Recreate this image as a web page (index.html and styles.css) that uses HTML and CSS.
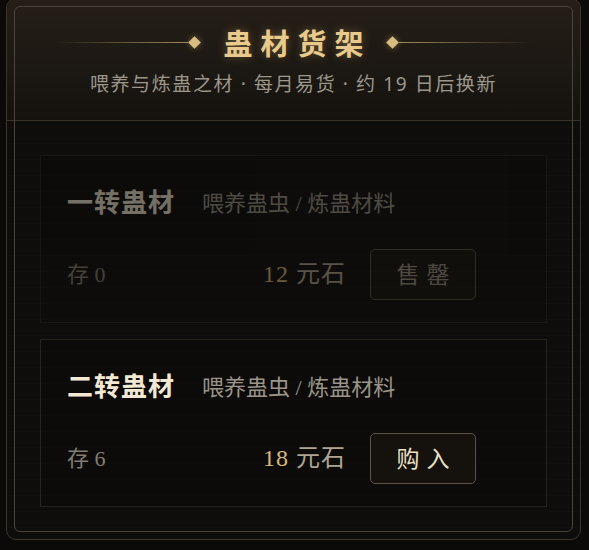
FILE: index.html
```html
<!DOCTYPE html>
<html lang="zh-CN">
<head>
  <meta charset="UTF-8">
  <meta name="viewport" content="width=device-width, initial-scale=1.0">
  <title>蛊材货架</title>
  <link rel="stylesheet" href="styles.css">
</head>
<body>
  <section class="shelf">
    <header class="shelf-head">
      <div class="title-row">
        <span class="rule left"></span>
        <span class="gem"></span>
        <h1 class="title">蛊材货架</h1>
        <span class="gem"></span>
        <span class="rule right"></span>
      </div>
      <p class="subtitle">喂养与炼蛊之材 · 每月易货 · 约 19 日后换新</p>
    </header>

    <main class="shelf-body">
      <!-- 一转：已售罄 -->
      <div class="item sold-out">
        <div class="item-head">
          <h2 class="item-name">一转蛊材</h2>
          <span class="item-desc">喂养蛊虫 / 炼蛊材料</span>
        </div>
        <div class="item-row">
          <span class="stock">存 0</span>
          <span class="price"><b>12</b> 元石</span>
          <button class="btn" disabled>售罄</button>
        </div>
      </div>

      <div class="item">
        <div class="item-head">
          <h2 class="item-name">二转蛊材</h2>
          <span class="item-desc">喂养蛊虫 / 炼蛊材料</span>
        </div>
        <div class="item-row">
          <span class="stock">存 6</span>
          <span class="price"><b>18</b> 元石</span>
          <button class="btn">购入</button>
        </div>
      </div>
    </main>
  </section>
</body>
</html>
```

FILE: styles.css
```css
:root {
  --bg: #0b0a08;
  --panel: #0f0d0b;
  --gold: #e8ca8c;
  --gold-dim: #d8b97a;
  --text: #f2e8d4;
  --sub: #9a9489;
  --muted: #837d72;
  --frame: #3d362b;
  --frame-in: #4a443a;
}
*, *::before, *::after {
  box-sizing: border-box;
}
body, h1, h2, p {
  margin: 0;
  padding: 0;
}
body {
  background: var(--bg);
  color: var(--text);
  font-family: "Liberation Serif", "Noto Sans CJK SC", serif;
  padding: 0 8px 0 6px;
  height: 550px;
  overflow: hidden;
}
.shelf {
  position: relative;
  margin-top: -2px;
  height: 542px;
  border: 1px solid var(--frame);
  border-radius: 10px;
  background:
    repeating-linear-gradient(180deg, rgba(255,255,255,0.012) 0 1px, transparent 1px 16px),
    var(--panel);
  overflow: hidden;
}
.shelf::before {
  content: "";
  position: absolute;
  inset: 7px;
  border: 1px solid var(--frame-in);
  border-radius: 6px;
  pointer-events: none;
}
.shelf-head {
  padding: 23px 0 22px;
  text-align: center;
  background: linear-gradient(180deg, #261f18 0%, #1c1813 55%, #15120e 100%);
  border-bottom: 1px solid #3a3329;
}
.title-row {
  display: flex;
  align-items: center;
  justify-content: center;
  height: 40px;
}
.rule {
  width: 134px;
  height: 1px;
}
.rule.left {
  background: linear-gradient(90deg, rgba(160,138,92,0) 0%, #a08a5c 100%);
}
.rule.right {
  background: linear-gradient(90deg, #a08a5c 0%, rgba(160,138,92,0) 100%);
}
.gem {
  width: 9px;
  height: 9px;
  margin: 0 2px;
  background: #d8bc80;
  transform: rotate(45deg);
  box-shadow: 0 0 6px rgba(216,188,128,0.45);
}
.title {
  margin: 0 14px;
  padding-left: 8px;
  font-family: "Noto Sans CJK SC", sans-serif;
  font-size: 29px;
  font-weight: 700;
  line-height: 40px;
  letter-spacing: 8px;
  color: var(--gold);
  text-shadow: 0 0 10px rgba(230,190,110,0.35);
}
.subtitle {
  margin-top: 8px;
  font-family: "Noto Sans", "Noto Sans CJK SC", sans-serif;
  font-size: 19px;
  line-height: 28px;
  letter-spacing: 1.6px;
  color: #9c968b;
}
.shelf-body {
  padding: 34px 33px 0;
  display: flex;
  flex-direction: column;
  gap: 16px;
}
.item {
  border: 1px solid #26221c;
  padding: 28px 70px 22px 26px;
  background: rgba(10,9,7,0.35);
}
.item.sold-out {
  opacity: 0.45;
}
.item-head {
  display: flex;
  align-items: center;
  height: 34px;
}
.item-name {
  font-family: "Noto Sans CJK SC", sans-serif;
  font-size: 26px;
  font-weight: 700;
  line-height: 34px;
  letter-spacing: 1px;
  color: var(--text);
}
.item-desc {
  margin-left: 27px;
  font-size: 22px;
  color: var(--sub);
}
.item-row {
  display: flex;
  align-items: center;
  margin-top: 31px;
  height: 51px;
}
.stock {
  flex: 1;
  padding-bottom: 6px;
  font-size: 22px;
  color: var(--muted);
}
.price {
  margin-right: 24px;
  padding-bottom: 6px;
  font-size: 24px;
  letter-spacing: 1px;
  color: #aea593;
}
.price b {
  font-weight: 400;
  color: var(--gold-dim);
}
.btn {
  width: 106px;
  height: 51px;
  padding: 0 0 3px;
  border: 1.5px solid #5c5446;
  border-radius: 5px;
  background: #15120e;
  color: #ece0c6;
  font-family: "Noto Sans CJK SC", sans-serif;
  font-size: 23px;
  letter-spacing: 7px;
  text-indent: 7px;
  cursor: pointer;
}
.btn:disabled {
  cursor: default;
  color: #9a9284;
}
```
